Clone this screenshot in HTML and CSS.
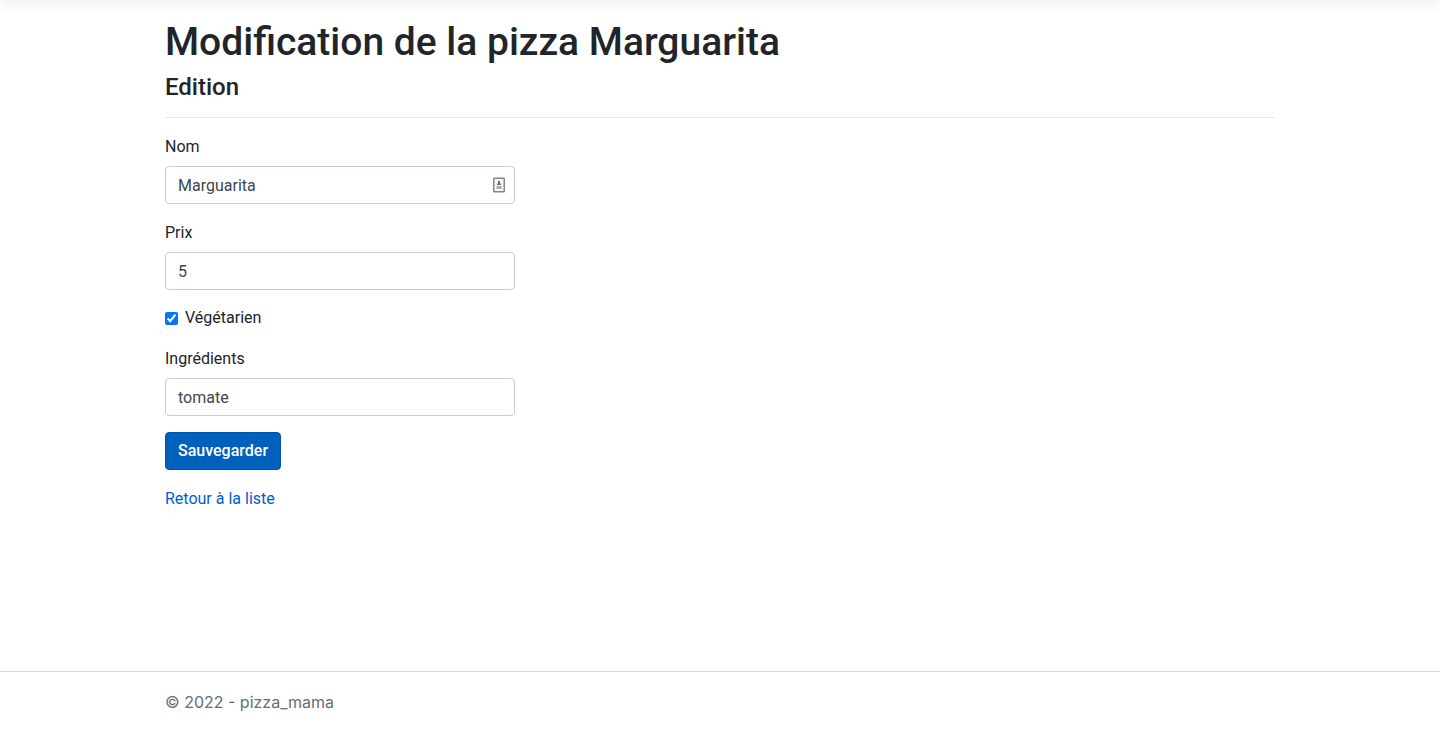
FILE: index.html
```html
<!DOCTYPE html>
<html lang="fr">
<head>
<meta charset="utf-8">
<meta name="viewport" content="width=device-width, initial-scale=1">
<title>Edition - pizza_mama</title>
<link rel="stylesheet" href="styles.css">
</head>
<body>
<header class="topbar"></header>
<main class="container content">
  <h1 class="title">Modification de la pizza Marguarita</h1>
  <h4 class="subtitle">Edition</h4>
  <hr class="rule">
  <form class="form">
    <div class="group">
      <label class="label" for="nom">Nom</label>
      <div class="field">
        <input class="control" id="nom" type="text" value="Marguarita">
        <svg class="field-icon" viewBox="0 0 14 16" aria-hidden="true">
          <rect x="1.750" y="1.250" width="10.500" height="13.500" rx="0.500" fill="#f7f7f7" stroke="#858585" stroke-width="1.500"/>
          <path d="M6 4h2v2l1 1v1H5V7l1-1z" fill="#6e6e6e"/>
          <path d="M4.500 9h5v3h-5z" fill="#a8a8a8"/>
        </svg>
      </div>
    </div>
    <div class="group">
      <label class="label" for="prix">Prix</label>
      <input class="control" id="prix" type="text" value="5">
    </div>
    <div class="group">
      <label class="check"><input class="checkbox" type="checkbox" checked> Végétarien</label>
    </div>
    <div class="group">
      <label class="label" for="ingredients">Ingrédients</label>
      <input class="control" id="ingredients" type="text" value="tomate">
    </div>
    <div class="group">
      <button class="button" type="button">Sauvegarder</button>
    </div>
  </form>
  <a class="link" href="#">Retour à la liste</a>
</main>
<footer class="footer">
  <div class="container">© 2022 - pizza_mama</div>
</footer>
</body>
</html>
```
FILE: styles.css
```css
*, *::before, *::after { box-sizing: border-box; }
body {
  margin: 0;
  min-height: 100vh;
  display: flex;
  flex-direction: column;
  background: #fff;
  color: #212529;
  font: 400 16px/24px Roboto, "Liberation Sans", sans-serif;
}
.topbar { margin: 0 6px; box-shadow: 0 0 12px 6px rgba(0, 0, 0, 0.06); }
.container { width: 100%; max-width: 1140px; margin: 0 auto; padding: 0 15px; }
.content { flex: 1; padding-top: 17px; }
.title { margin: 0 0 6px; font-size: 39px; line-height: 50px; font-weight: 500; }
.subtitle { margin: 0; font-size: 24px; line-height: 28px; font-weight: 500; }
.rule { margin: 16px 0; border: 0; border-top: 1px solid #e5e5e5; }
.form { max-width: 350px; }
.group { margin-bottom: 16px; }
.label { display: block; margin-bottom: 6px; line-height: 26px; }
.field { position: relative; }
.control {
  display: block;
  width: 100%;
  height: 38px;
  padding: 6px 12px;
  border: 1px solid #c6cbd6;
  border-radius: 4px;
  background: #fff;
  color: #41464c;
  font: inherit;
}
.field-icon { position: absolute; top: 11px; right: 9px; width: 14px; height: 16px; }
.check { display: flex; align-items: center; gap: 7px; }
.checkbox { width: 13px; height: 13px; margin: 0; accent-color: #0075ff; }
.button {
  display: block;
  height: 38px;
  padding: 6px 12px;
  border: 1px solid #0055a8;
  border-radius: 4px;
  background: #0061bd;
  color: #fff;
  font: inherit;
  font-weight: 500;
}
.link { display: inline-block; line-height: 26px; color: #005bd3; text-decoration: none; }
.footer {
  border-top: 1px solid #dadddf;
  color: #656e76;
  font-family: Inter, "Liberation Sans", sans-serif;
  line-height: 60px;
}
```
